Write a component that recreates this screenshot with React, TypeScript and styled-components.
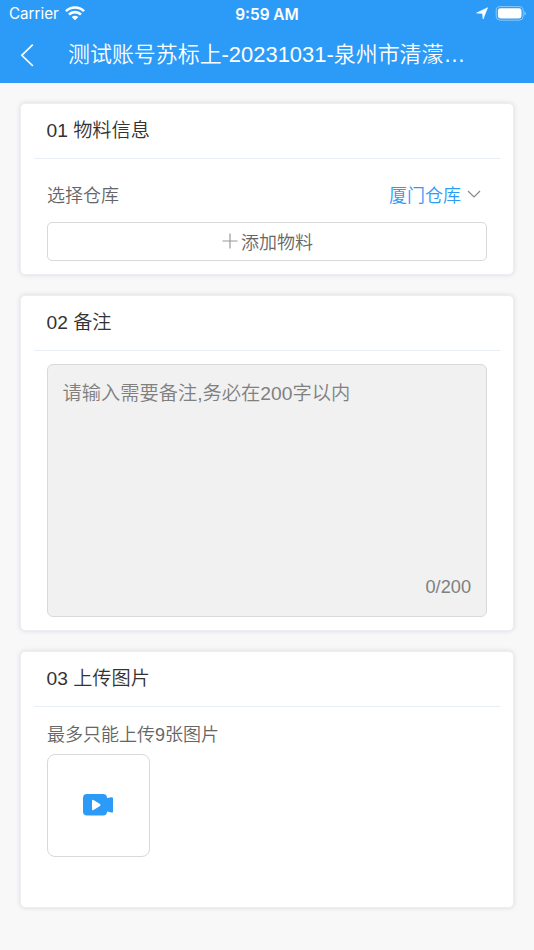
import React from "react";
import styled, { createGlobalStyle } from "styled-components";

const Global = createGlobalStyle`
  * { box-sizing: border-box; }
  body { margin: 0; background: #f8f8f8; font-family: "Liberation Sans", "Noto Sans CJK SC", sans-serif; font-weight: 350; }
`;

const Page = styled.div`
  width: 534px;
  height: 950px;
  overflow: hidden;
  background: #f8f8f8;
`;

const Header = styled.header`
  height: 83px;
  background: #2c9bf7;
  color: #fff;
`;

const StatusBar = styled.div`
  height: 28px;
  display: grid;
  grid-template-columns: 1fr auto 1fr;
  align-items: center;
  padding: 0 8px 0 9px;
  font-family: Inter, sans-serif;
  font-size: 15.2px;
  font-weight: 400;
`;

const StatusGroup = styled.div<{ $end?: boolean }>`
  display: flex;
  align-items: center;
  gap: 6px;
  padding-bottom: 1px;
  justify-content: ${(p) => (p.$end ? "flex-end" : "flex-start")};
`;

const Clock = styled.span`
  padding-right: 1px;
  font-weight: 600;
  font-size: 15.4px;
`;

const NavBar = styled.div`
  height: 54px;
  display: flex;
  align-items: center;
  padding-left: 20px;
`;

const BackButton = styled.button`
  width: 48px;
  padding: 0;
  border: 0;
  background: none;
  color: inherit;
  display: flex;
`;

const Title = styled.h1`
  margin: 0;
  font-size: 21.95px;
  line-height: 30px;
  font-weight: 350;
  white-space: nowrap;
`;

const Content = styled.main`
  padding: 20px;
  display: flex;
  flex-direction: column;
  gap: 20px;
`;

const Card = styled.section<{ $height: number }>`
  height: ${(p) => p.$height}px;
  padding: 0 13px;
  background: #fff;
  border: 1px solid #ebeef5;
  border-radius: 5px;
  box-shadow: 0 0 5px rgba(0, 0, 0, 0.12);
`;

const CardTitle = styled.h2`
  margin: 0;
  height: 55px;
  padding: 0 12.5px;
  border-bottom: 1px solid #e9edf6;
  color: #333;
  font-size: 19.2px;
  font-weight: 350;
  line-height: 54px;
`;

const CardBody = styled.div`
  padding: 13px 13px 0;
`;

const Row = styled.div`
  height: 44px;
  margin-bottom: 6px;
  display: flex;
  align-items: center;
  justify-content: space-between;
  color: #666;
  font-size: 18px;
`;

const Picker = styled.div`
  display: flex;
  align-items: center;
  gap: 6px;
  padding-right: 6px;
  color: #2c9bf7;
`;

const AddButton = styled.button`
  width: 100%;
  height: 39px;
  padding: 0 0 2px 1px;
  display: flex;
  align-items: center;
  justify-content: center;
  gap: 3px;
  border: 1px solid #d9d9d9;
  border-radius: 5px;
  background: #fff;
  color: #666;
  font: inherit;
  font-size: 18px;
`;

const NoteField = styled.div`
  height: 253px;
  padding: 14px 15px 14px 14.5px;
  display: flex;
  flex-direction: column;
  justify-content: space-between;
  border: 1px solid #d9d9d9;
  border-radius: 6px;
  background: #f1f1f1;
  color: #808080;
  font-size: 19.25px;
  line-height: 30px;
`;

const Counter = styled.span`
  align-self: flex-end;
  font-size: 18.2px;
`;

const Hint = styled.p`
  margin: 0;
  padding-top: 2px;
  color: #666;
  font-size: 18px;
  line-height: 27px;
`;

const UploadTile = styled.button`
  width: 103px;
  height: 103px;
  margin-top: 5px;
  padding: 0 1px 2px 0;
  display: flex;
  align-items: center;
  justify-content: center;
  border: 1px solid #d9d9d9;
  border-radius: 8px;
  background: #fff;
`;

const WifiIcon = () => (
  <svg width="20" height="15" viewBox="0 0 20 15" fill="none" stroke="#fff" strokeWidth="2.6">
    <path d="M1 5.1C6 .2 14 .2 19 5.1M4 8.5c3.4-3.2 8.6-3.2 12 0" />
    <path d="M6.7 11c1.8-1.6 4.8-1.6 6.6 0L10 14.3Z" fill="#fff" stroke="none" />
  </svg>
);

const LocationIcon = () => (
  <svg width="14" height="13" viewBox="0 0 14 13" fill="#fff" stroke="#fff" strokeWidth=".6" strokeLinejoin="round"><path d="M12.6.7 8.1 12 7.5 6.4 1.6 6Z" /></svg>
);

const BatteryIcon = () => (
  <svg width="31" height="15" viewBox="0 0 31 15">
    <rect x="1.2" y=".6" width="27" height="13.6" rx="4" fill="none" stroke="#fff" strokeOpacity=".45" />
    <rect x="2.9" y="2.3" width="23.6" height="10.2" rx="2.4" fill="#fff" />
    <path d="M29.5 5.2c1.8.8 1.8 3.6 0 4.4Z" fill="#fff" fillOpacity=".5" />
  </svg>
);

export default function App() {
  return (
    <Page>
      <Global />
      <Header>
        <StatusBar>
          <StatusGroup>Carrier <WifiIcon /></StatusGroup>
          <Clock>9:59 AM</Clock>
          <StatusGroup $end><LocationIcon /><BatteryIcon /></StatusGroup>
        </StatusBar>
        <NavBar>
          <BackButton aria-label="返回">
            <svg width="14" height="24" viewBox="0 0 14 24" fill="none" stroke="#fff" strokeWidth="1.6"><path d="M12.8 1.7 1.8 12.3l11 10.5" /></svg>
          </BackButton>
          <Title>测试账号苏标上-20231031-泉州市清濛…</Title>
        </NavBar>
      </Header>
      <Content>
        <Card $height={172}>
          <CardTitle>01 物料信息</CardTitle>
          <CardBody>
            <Row>
              <span>选择仓库</span>
              <Picker>
                厦门仓库
                <svg width="14" height="9" viewBox="0 0 14 9" fill="none" stroke="#888" strokeWidth="1.2"><path d="m1 1 6 6 6-6" /></svg>
              </Picker>
            </Row>
            <AddButton>
              <svg width="16" height="16" viewBox="0 0 16 16" stroke="#999" strokeWidth="1.2"><path d="M8 .5v15M.5 8h15" /></svg>
              添加物料
            </AddButton>
          </CardBody>
        </Card>
        <Card $height={336}>
          <CardTitle>02 备注</CardTitle>
          <CardBody>
            <NoteField>
              <span>请输入需要备注,务必在200字以内</span>
              <Counter>0/200</Counter>
            </NoteField>
          </CardBody>
        </Card>
        <Card $height={257}>
          <CardTitle>03 上传图片</CardTitle>
          <CardBody>
            <Hint>最多只能上传9张图片</Hint>
            <UploadTile aria-label="上传">
              <svg width="30" height="22" viewBox="0 0 30 22" fill="#2c9bf7">
                <path fillRule="evenodd" d="M4 0h16a4 4 0 0 1 4 4l4.500-.8Q30 3 30 4.500v13q0 1.500-1.500 1L24 17.500a4 4 0 0 1-4 4H4a4 4 0 0 1-4-4V4a4 4 0 0 1 4-4Zm5 7v8q0 1.700 1.500 1l6.500-4q1-1 0-2l-6.500-4Q9 5.300 9 7Z" />
              </svg>
            </UploadTile>
          </CardBody>
        </Card>
      </Content>
    </Page>
  );
}
